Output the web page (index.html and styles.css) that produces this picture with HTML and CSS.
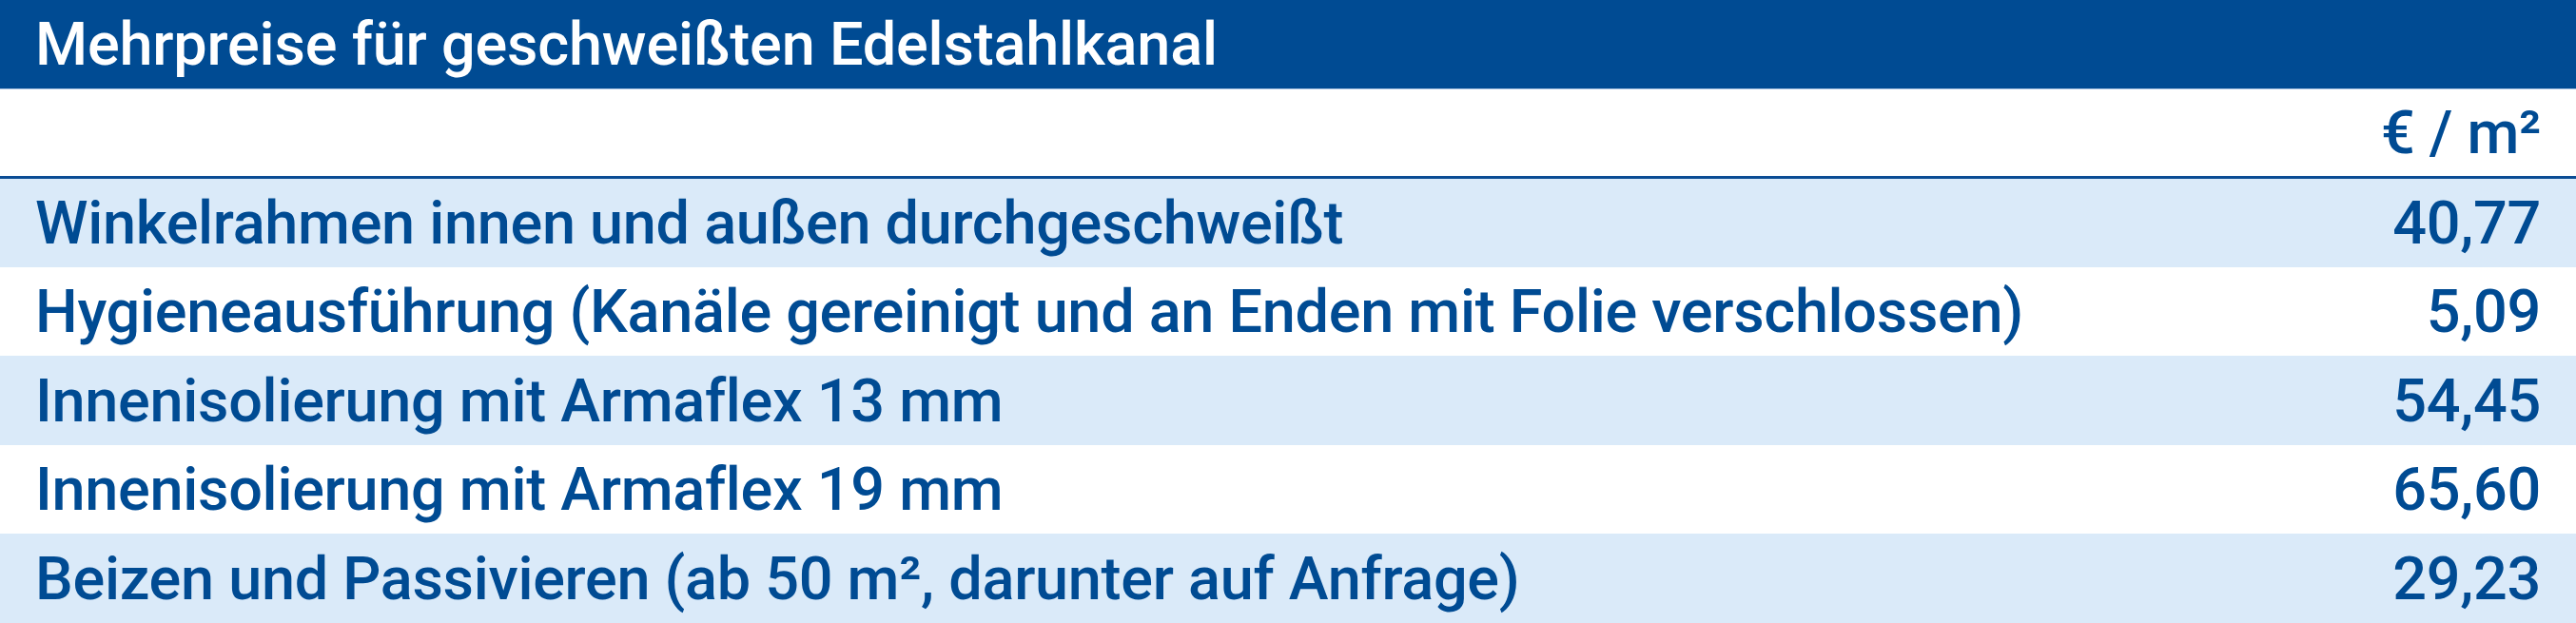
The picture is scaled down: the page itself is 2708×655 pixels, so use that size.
FILE: index.html
```html
<!DOCTYPE html>
<html lang="de">
<head>
<meta charset="utf-8">
<title>Mehrpreise</title>
<link rel="stylesheet" href="styles.css">
</head>
<body>
<div class="table">
  <div class="title">Mehrpreise für geschweißten Edelstahlkanal</div>
  <div class="head"><span>€ / m²</span></div>
  <div class="row alt"><span>Winkelrahmen innen und außen durchgeschweißt</span><span>40,77</span></div>
  <div class="row"><span>Hygieneausführung (Kanäle gereinigt und an Enden mit Folie verschlossen)</span><span>5,09</span></div>
  <div class="row alt tall"><span>Innenisolierung mit Armaflex 13 mm</span><span>54,45</span></div>
  <div class="row"><span>Innenisolierung mit Armaflex 19 mm</span><span>65,60</span></div>
  <div class="row alt tall"><span>Beizen und Passivieren (ab 50 m², darunter auf Anfrage)</span><span>29,23</span></div>
</div>
</body>
</html>
```

FILE: styles.css
```css
html, body {
  margin: 0;
  padding: 0;
  background: #ffffff;
}
.table {
  width: 2708px;
  font-family: Roboto, "Liberation Sans", sans-serif;
  font-weight: 500;
  font-size: 63px;
  letter-spacing: -0.3px;
  color: #004b93;
}
.title {
  height: 93px;
  background: #004b93;
  color: #ffffff;
  display: flex;
  align-items: center;
  padding: 0 37px;
  border-bottom: 1px solid #a9c3e2;
  letter-spacing: -0.2px;
}
.head {
  height: 91px;
  display: flex;
  align-items: center;
  justify-content: flex-end;
  padding: 0 37px;
  border-bottom: 3px solid #0a4c94;
}
.row {
  height: 93px;
  display: flex;
  align-items: center;
  justify-content: space-between;
  padding: 0 37px;
  background: #ffffff;
}
.row.tall {
  height: 94px;
}
.row.alt {
  background: #daeaf9;
}
```
